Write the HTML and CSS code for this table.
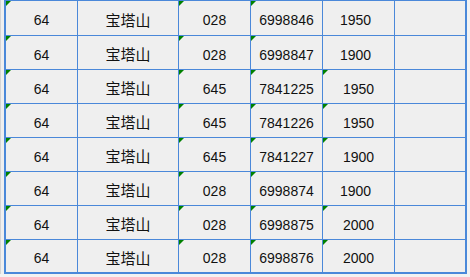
FILE: index.html
```html
<!DOCTYPE html>
<html lang="zh">
<head>
<meta charset="utf-8">
<title>宝塔山</title>
<link rel="stylesheet" href="styles.css">
</head>
<body>
<div class="sheet">
  <div class="stub"></div>
  <div class="sel">
    <div class="grid">
      <div class="c txt"><i class="tri"></i>64</div><div class="c cjk">宝塔山</div><div class="c txt"><i class="tri"></i>028</div><div class="c txt"><i class="tri"></i>6998846</div><div class="c num">1950</div><div class="c"></div>
      <div class="c txt"><i class="tri"></i>64</div><div class="c cjk">宝塔山</div><div class="c txt"><i class="tri"></i>028</div><div class="c txt"><i class="tri"></i>6998847</div><div class="c num">1900</div><div class="c"></div>
      <div class="c txt"><i class="tri"></i>64</div><div class="c cjk">宝塔山</div><div class="c txt"><i class="tri"></i>645</div><div class="c txt"><i class="tri"></i>7841225</div><div class="c txt"><i class="tri"></i>1950</div><div class="c"></div>
      <div class="c txt"><i class="tri"></i>64</div><div class="c cjk">宝塔山</div><div class="c txt"><i class="tri"></i>645</div><div class="c txt"><i class="tri"></i>7841226</div><div class="c txt"><i class="tri"></i>1950</div><div class="c"></div>
      <div class="c txt"><i class="tri"></i>64</div><div class="c cjk">宝塔山</div><div class="c txt"><i class="tri"></i>645</div><div class="c txt"><i class="tri"></i>7841227</div><div class="c txt"><i class="tri"></i>1900</div><div class="c"></div>
      <div class="c txt"><i class="tri"></i>64</div><div class="c cjk">宝塔山</div><div class="c txt"><i class="tri"></i>028</div><div class="c txt"><i class="tri"></i>6998874</div><div class="c num">1900</div><div class="c"></div>
      <div class="c txt"><i class="tri"></i>64</div><div class="c cjk">宝塔山</div><div class="c txt"><i class="tri"></i>028</div><div class="c txt"><i class="tri"></i>6998875</div><div class="c txt"><i class="tri"></i>2000</div><div class="c"></div>
      <div class="c txt"><i class="tri"></i>64</div><div class="c cjk">宝塔山</div><div class="c txt"><i class="tri"></i>028</div><div class="c txt"><i class="tri"></i>6998876</div><div class="c txt"><i class="tri"></i>2000</div><div class="c"></div>
    </div>
  </div>
</div>
</body>
</html>
```

FILE: styles.css
```css
html, body {
  margin: 0;
  padding: 0;
  background: #f2f2f2;
  width: 470px;
  height: 277px;
  overflow: hidden;
}

.sheet {
  display: flex;
  align-items: flex-start;
}

.stub {
  width: 3px;
  height: 274px;
  border-left: 1px solid #d4d4d4;
  background: repeating-linear-gradient(to bottom, #efefef 0, #efefef 35px, #d4d4d4 35px, #d4d4d4 36px);
  background-size: 100% 34px;
  background-position: 0 1px;
}

.sel {
  border-left: 2px solid #4a88d9;
  border-right: 2px solid #4a88d9;
  border-bottom: 2px solid #4a88d9;
  border-top: 1px solid #4a88d9;
  background: #4a88d9;
}

.grid {
  display: grid;
  grid-template-columns: 71px 100px 71px 71px 71px 70px;
  grid-template-rows: 34px repeat(6, 33px) 32px;
  gap: 1px;
}

.c {
  position: relative;
  background: #efefef;
  display: flex;
  align-items: center;
  justify-content: center;
  box-sizing: border-box;
  padding-top: 4px;
  font-family: "Liberation Sans", Arial, sans-serif;
  font-size: 14px;
  line-height: 16px;
  color: #111;
}

.cjk {
  font-family: "Noto Sans CJK SC", "Liberation Sans", sans-serif;
  font-size: 15px;
  padding-top: 3px;
}

.num {
  padding-right: 6px;
}

.tri {
  position: absolute;
  left: 0;
  top: 0;
  width: 0;
  height: 0;
  border-top: 5px solid #008000;
  border-right: 5px solid transparent;
}
```
